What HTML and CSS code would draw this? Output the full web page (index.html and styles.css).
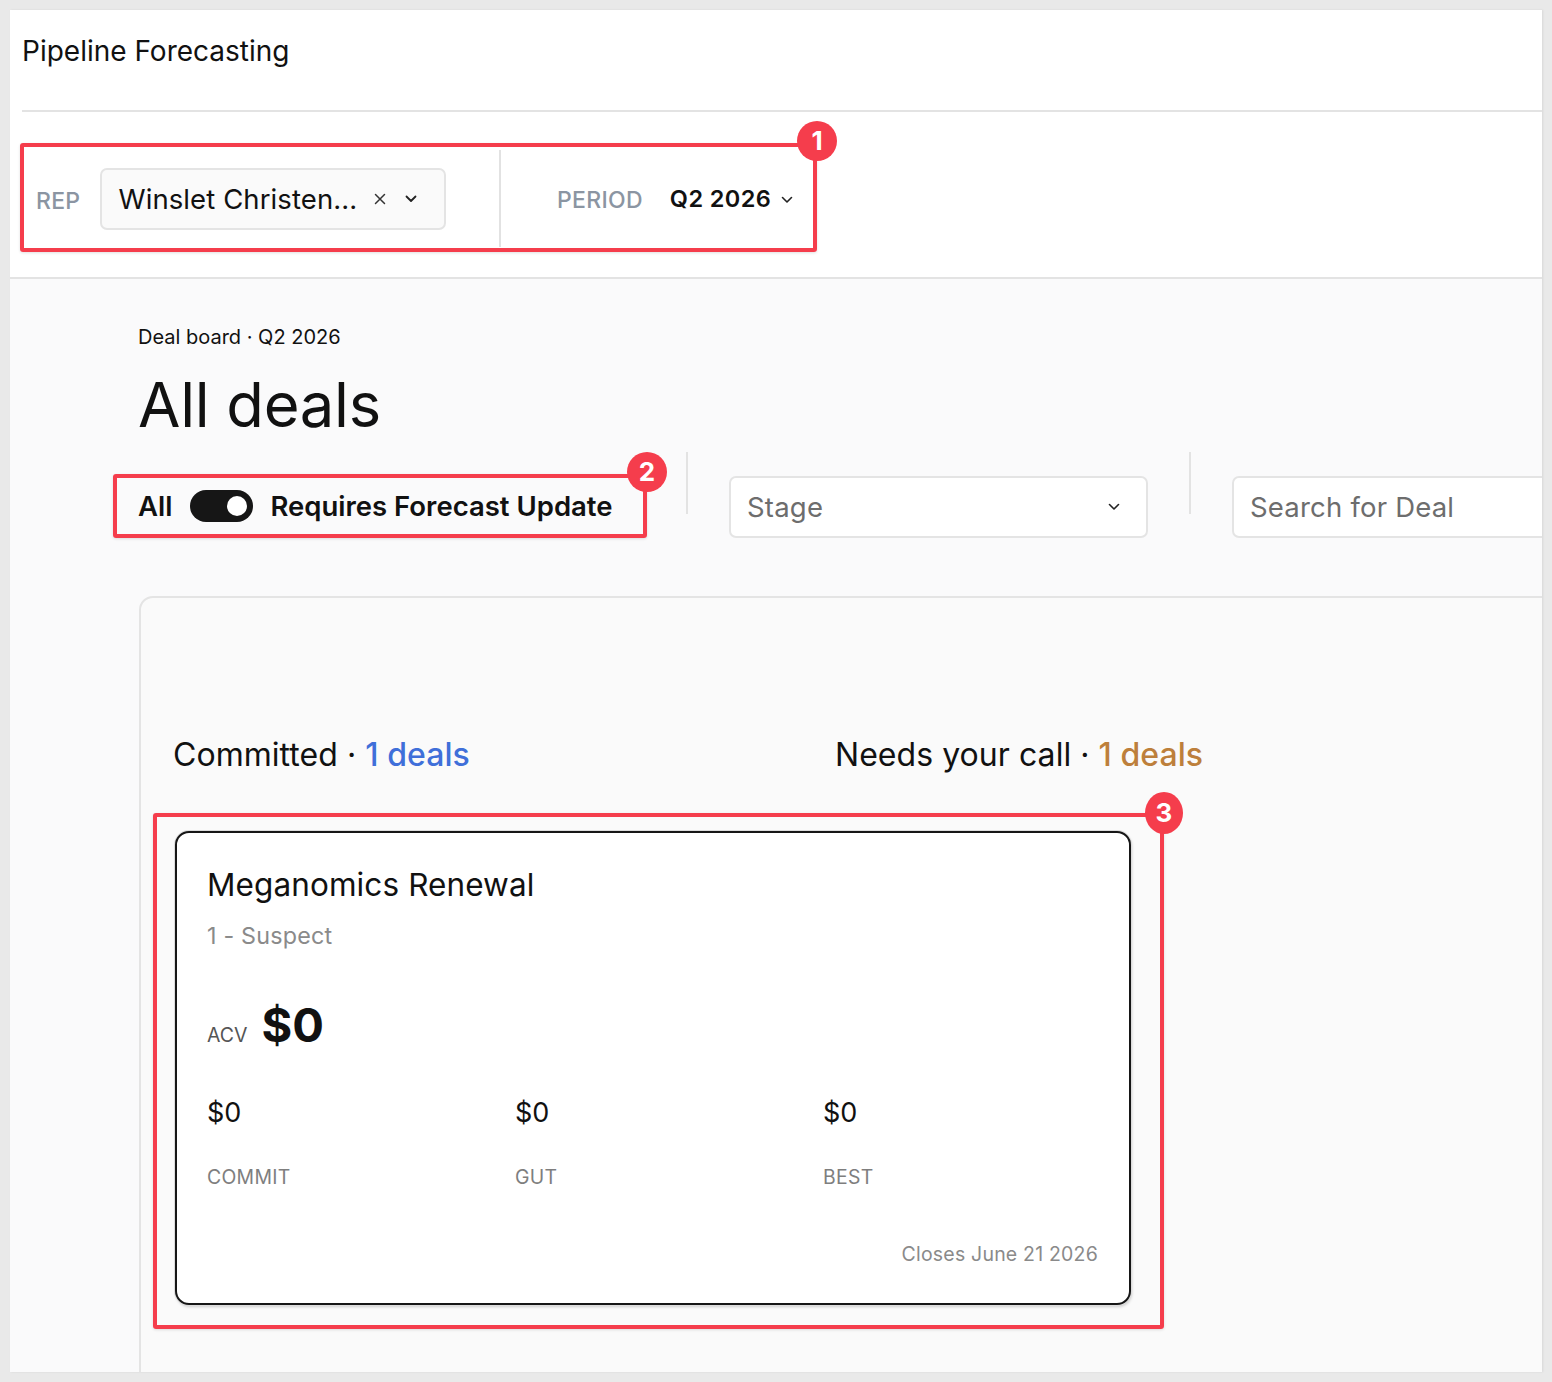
FILE: index.html
```html
<!DOCTYPE html>
<html lang="en">
<head>
<meta charset="utf-8">
<title>Pipeline Forecasting</title>
<link rel="stylesheet" href="styles.css">
</head>
<body>
<div class="page">
  <header class="app-header">
    <div class="app-header-inner">
      <h1 class="app-title">Pipeline Forecasting</h1>
    </div>
  </header>

  <section class="toolbar">
    <div class="note note-1">
      <span class="badge">1</span>
      <div class="filter-group rep-group">
        <span class="filter-label">REP</span>
        <div class="rep-select">
          <span class="rep-value">Winslet Christen...</span>
          <svg class="icon-x" width="14" height="14" viewBox="0 0 14 14"><path d="M2.5 2.5l9 9M11.5 2.5l-9 9" stroke="#333" stroke-width="1.5" stroke-linecap="round"/></svg>
          <svg class="icon-chev" width="12" height="8" viewBox="0 0 12 8"><path d="M1.5 1.5l4.5 4.5 4.5-4.5" fill="none" stroke="#222" stroke-width="1.8" stroke-linecap="round" stroke-linejoin="round"/></svg>
        </div>
      </div>
      <div class="v-divider"></div>
      <div class="filter-group period-group">
        <span class="filter-label">PERIOD</span>
        <span class="period-value">Q2 2026</span>
        <svg class="icon-chev-sm" width="12" height="8" viewBox="0 0 12 8"><path d="M1.5 1.5l4.5 4.5 4.5-4.5" fill="none" stroke="#222" stroke-width="1.6" stroke-linecap="round" stroke-linejoin="round"/></svg>
      </div>
    </div>
  </section>

  <main class="main">
    <div class="crumb">Deal board · Q2 2026</div>
    <h2 class="page-title">All deals</h2>

    <div class="controls">
      <div class="note note-2">
        <span class="badge">2</span>
        <span class="toggle-label">All</span>
        <span class="toggle"><span class="knob"></span></span>
        <span class="toggle-label">Requires Forecast Update</span>
      </div>
      <div class="c-divider"></div>
      <div class="stage-select">
        <span class="stage-text">Stage</span>
        <svg width="12" height="8" viewBox="0 0 12 8"><path d="M1.5 1.5l4.5 4.5 4.5-4.5" fill="none" stroke="#222" stroke-width="1.6" stroke-linecap="round" stroke-linejoin="round"/></svg>
      </div>
      <div class="c-divider"></div>
      <div class="search-box">
        <span class="search-placeholder">Search for Deal</span>
      </div>
    </div>

    <section class="board">
      <div class="board-heads">
        <div class="col-head col-head-1">Committed · <span class="count-blue">1 deals</span></div>
        <div class="col-head">Needs your call · <span class="count-amber">1 deals</span></div>
      </div>

      <div class="note note-3">
        <span class="badge badge-3">3</span>
        <article class="deal-card">
          <h3 class="deal-name">Meganomics Renewal</h3>
          <div class="deal-stage">1 - Suspect</div>
          <div class="acv-row">
            <span class="acv-label">ACV</span>
            <span class="acv-value">$0</span>
          </div>
          <div class="metrics">
            <div class="metric">
              <div class="metric-value">$0</div>
              <div class="metric-label">COMMIT</div>
            </div>
            <div class="metric">
              <div class="metric-value">$0</div>
              <div class="metric-label">GUT</div>
            </div>
            <div class="metric">
              <div class="metric-value">$0</div>
              <div class="metric-label">BEST</div>
            </div>
          </div>
          <div class="closes">Closes June 21 2026</div>
        </article>
      </div>
    </section>
  </main>
</div>
</body>
</html>
```

FILE: styles.css
```css
* { box-sizing: border-box; }

html, body {
  margin: 0;
  padding: 0;
}

body {
  background: #e9e9e9;
  font-family: Inter, "Noto Sans", "Liberation Sans", sans-serif;
  color: #111;
}

.page {
  margin: 10px;
  width: 1532px;
  height: 1362px;
  background: #fafafb;
  overflow: hidden;
  box-shadow: 1px 0 2px rgba(0,0,0,0.08);
}

/* header */
.app-header {
  background: #fff;
  height: 102px;
}
.app-header-inner {
  margin-left: 12px;
  height: 102px;
  border-bottom: 2px solid #e3e3e3;
  padding-top: 24px;
}
.app-title {
  margin: 0;
  font-size: 28px;
  line-height: 34px;
  font-weight: 400;
  color: #111;
}

/* toolbar */
.toolbar {
  background: #fff;
  padding: 31px 0 25px 10px;
  border-bottom: 2px solid #e3e3e3;
}

.note {
  position: relative;
  border: 4px solid #f53d4c;
  border-radius: 3px;
  box-shadow: 0 1px 3px rgba(0,0,0,0.12);
  flex-shrink: 0;
  white-space: nowrap;
}

.badge {
  position: absolute;
  top: -26px;
  right: -24px;
  width: 40px;
  height: 40px;
  border-radius: 50%;
  background: #f53d4c;
  color: #fff;
  font-weight: 700;
  font-size: 26px;
  line-height: 40px;
  text-align: center;
  z-index: 2;
}

.note-1 {
  display: flex;
  width: 797px;
  height: 109px;
}

.filter-group {
  display: flex;
  align-items: center;
}
.rep-group {
  padding-left: 12px;
  width: 475px;
  padding-top: 2px;
}
.filter-label {
  font-size: 23px;
  font-weight: 500;
  color: #8b95a2;
  letter-spacing: 0.3px;
}
.rep-group .filter-label {
  margin-top: 4px;
}
.rep-select {
  margin-left: 20px;
  width: 346px;
  height: 62px;
  border: 2px solid #e4e4e4;
  border-radius: 7px;
  background: #fafafa;
  display: flex;
  align-items: center;
  padding-left: 16px;
}
.rep-value {
  font-size: 27.5px;
  color: #111;
  letter-spacing: 0.1px;
}
.icon-x {
  margin-left: 16px;
}
.icon-chev {
  margin-left: 18px;
}

.v-divider {
  width: 2px;
  margin-top: 3px;
  height: 97px;
  background: #e2e2e2;
}

.period-group {
  padding-left: 56px;
  padding-top: 4px;
}
.period-value {
  margin-left: 27px;
  margin-top: -2px;
  font-size: 23.5px;
  font-weight: 600;
  color: #111;
  letter-spacing: 0.4px;
}
.icon-chev-sm {
  margin-left: 10px;
}

/* main */
.main {
  padding: 46px 0 0 128px;
}
.crumb {
  font-size: 20px;
  line-height: 24px;
  color: #111;
}
.page-title {
  margin: 18px 0 0;
  font-size: 61.5px;
  line-height: 76px;
  font-weight: 400;
  color: #111;
  letter-spacing: -0.3px;
}

.controls {
  display: flex;
  align-items: flex-start;
  margin-top: 9px;
  height: 86px;
}

.note-2 {
  margin-top: 22px;
  margin-left: -25px;
  height: 64px;
  width: 534px;
  display: flex;
  align-items: center;
  padding-left: 21px;
}
.toggle-label {
  font-size: 27.5px;
  font-weight: 600;
  color: #111;
}
.toggle {
  margin: 0 17px 0 18px;
  width: 63px;
  height: 32px;
  flex-shrink: 0;
  border-radius: 16px;
  background: #161616;
  display: flex;
  align-items: center;
  justify-content: flex-end;
  padding-right: 6px;
}
.knob {
  width: 20px;
  height: 20px;
  border-radius: 50%;
  background: #fff;
}

.c-divider {
  width: 2px;
  height: 62px;
  flex-shrink: 0;
  background: #e3e3e3;
  margin: 0 41px 0 39px;
}
.stage-select ~ .c-divider {
  margin-left: 41px;
}

.stage-select,
.search-box {
  margin-top: 24px;
  height: 62px;
  border: 2px solid #e4e4e4;
  border-radius: 7px;
  background: #fff;
  display: flex;
  align-items: center;
  padding-left: 16px;
  flex-shrink: 0;
}
.stage-select {
  width: 419px;
  justify-content: space-between;
  padding-right: 26px;
}
.search-box {
  width: 419px;
}
.stage-text,
.search-placeholder {
  font-size: 27.5px;
  color: #6d6d6d;
  letter-spacing: 0.2px;
}

/* board */
.board {
  margin-top: 58px;
  margin-left: 1px;
  margin-right: -60px;
  min-height: 900px;
  border: 2px solid #e4e4e4;
  border-radius: 14px;
  background: #fafafa;
  padding: 139px 0 0 32px;
}
.board-heads {
  display: flex;
}
.col-head {
  font-size: 32px;
  line-height: 36px;
  color: #111;
  letter-spacing: 0.05px;
}
.col-head-1 {
  width: 662px;
}
.count-blue {
  color: #3f6fd9;
  font-weight: 500;
}
.count-amber {
  color: #bd7f3b;
  font-weight: 500;
}

.note-3 {
  margin-top: 40px;
  margin-left: -20px;
  width: 1011px;
  padding: 14px 29px 20px 18px;
  white-space: normal;
}
.badge-3 {
  width: 38px;
  height: 42px;
  line-height: 42px;
  top: -25px;
  right: -23px;
}

.deal-card {
  background: #fff;
  border: 2px solid #161616;
  border-radius: 14px;
  box-shadow: 0 0 0 1px #dcdcdc, 1px 2px 3px rgba(0,0,0,0.18);
  padding: 34px 31px 37px 30px;
}
.deal-name {
  margin: 0;
  font-size: 31.5px;
  line-height: 36px;
  font-weight: 400;
  color: #111;
  letter-spacing: 0.1px;
}
.deal-stage {
  margin-top: 19px;
  font-size: 23.3px;
  line-height: 28px;
  color: #8a8a8a;
  letter-spacing: 0.2px;
}
.acv-row {
  margin-top: 47px;
  display: flex;
  align-items: baseline;
  height: 56px;
}
.acv-label {
  font-size: 19.5px;
  color: #555;
  margin-right: 14px;
}
.acv-value {
  font-size: 47px;
  line-height: 56px;
  font-weight: 700;
  color: #111;
}
.metrics {
  margin-top: 44px;
  display: grid;
  grid-template-columns: 308px 308px 1fr;
}
.metric-value {
  font-size: 27px;
  line-height: 32px;
  color: #111;
}
.metric-label {
  margin-top: 36px;
  font-size: 19.4px;
  line-height: 24px;
  color: #7e7e7e;
  letter-spacing: 0.3px;
}
.closes {
  margin-top: 53px;
  text-align: right;
  font-size: 19.5px;
  line-height: 24px;
  color: #8a8a8a;
  letter-spacing: 0.2px;
}
```
